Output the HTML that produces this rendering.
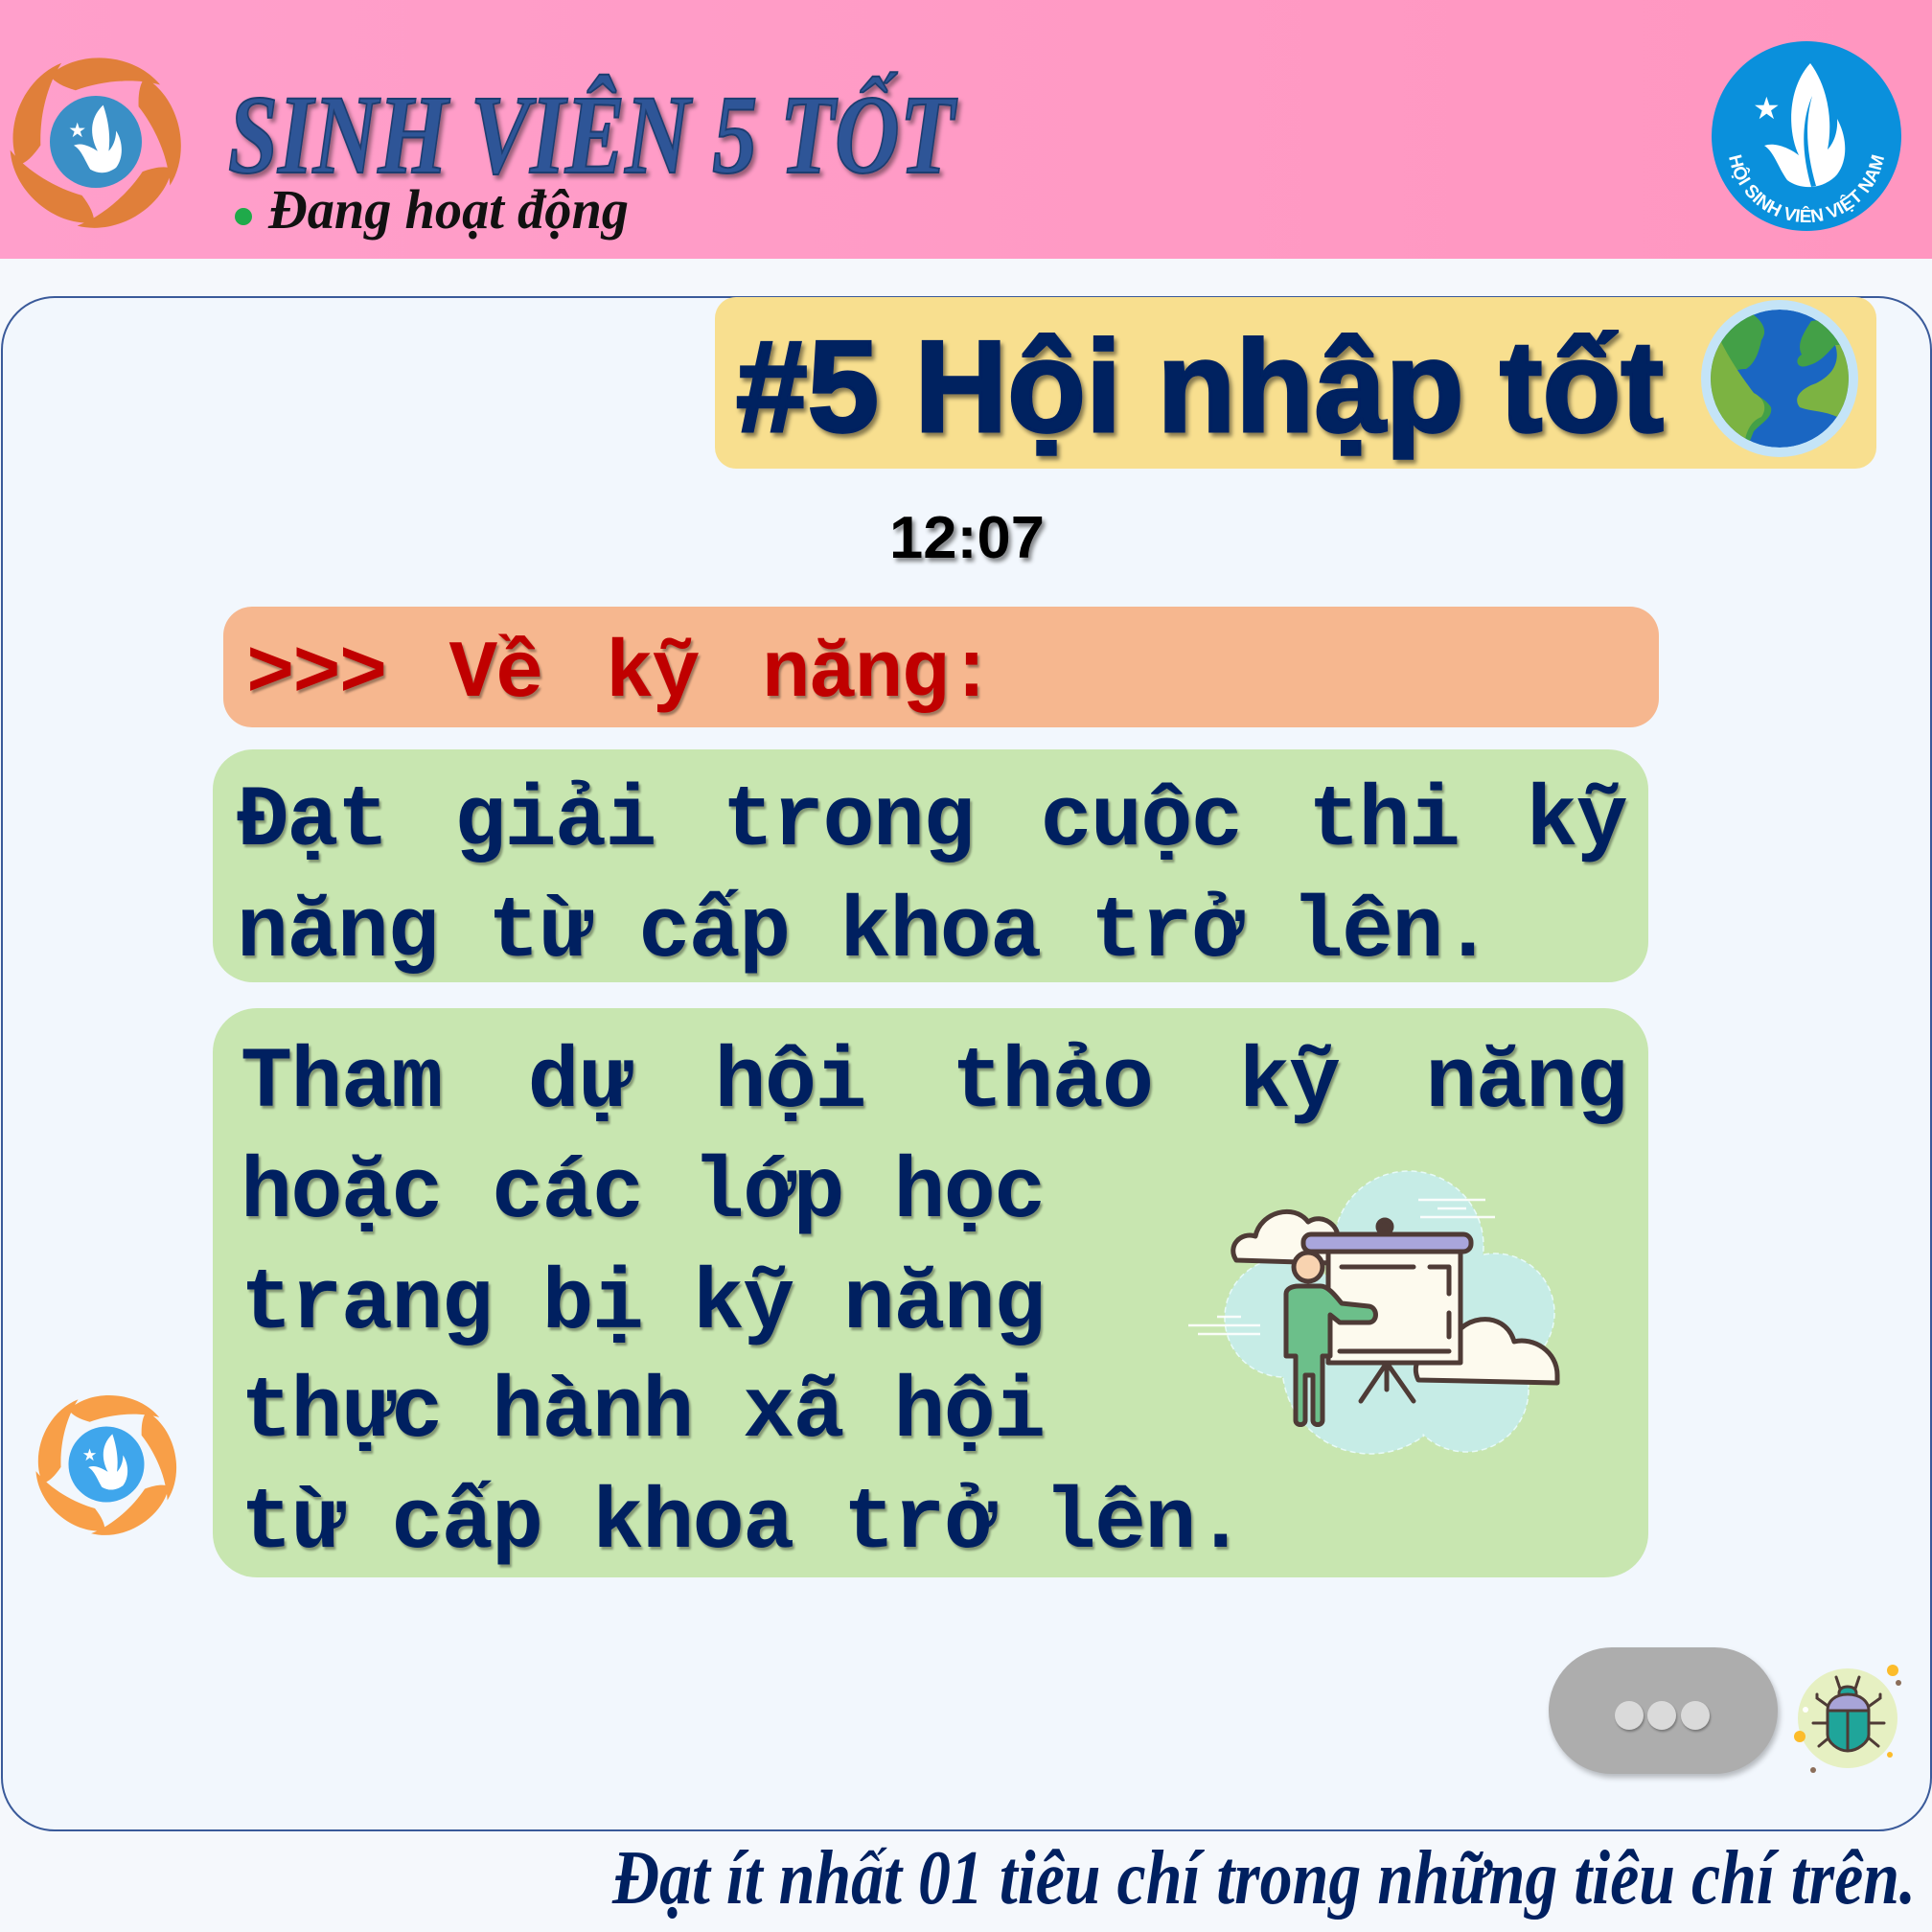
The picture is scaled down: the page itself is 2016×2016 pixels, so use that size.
<!DOCTYPE html>
<html><head><meta charset="utf-8"><style>
html,body{margin:0;padding:0}
body{width:2016px;height:2016px;position:relative;overflow:hidden;background:#f5f8fc;font-family:"Liberation Sans",sans-serif}
.abs{position:absolute}
.mono{font-family:"Liberation Mono","DejaVu Sans Mono",monospace;font-weight:bold;font-size:90px;letter-spacing:-1.6px;color:#002060;text-shadow:2px 3px 2px rgba(0,0,0,.35);white-space:pre}
.j{text-align:justify;text-align-last:justify}
</style></head><body>
<svg width="0" height="0" style="position:absolute">
<defs>
<symbol id="logo" viewBox="-100 -100 200 200">
 <g id="pet"><path d="M-50,-72 C-20,-100 40,-98 70,-62 C40,-70 5,-66 -22,-56 C-36,-60 -45,-65 -50,-72 Z"/></g>
 <use href="#pet" transform="rotate(72)"/><use href="#pet" transform="rotate(144)"/><use href="#pet" transform="rotate(216)"/><use href="#pet" transform="rotate(288)"/>
</symbol>
</defs>
</svg>

<!-- header -->
<div class="abs" style="left:0;top:0;width:2016px;height:270px;background:linear-gradient(90deg,#ff9fcb,#ff9ac4 60%,#ff96c0)"></div>
<svg class="abs" style="left:4px;top:52px" width="192" height="192" viewBox="0 0 200 200"><g fill="#e07f3a"><use href="#logo" x="0" y="0" width="200" height="200"/><use href="#logo" x="0" y="0" width="200" height="200" transform="rotate(36 100 100) scale(1)" opacity="0"/></g><circle cx="100" cy="100" r="50" fill="#3a8fc6"/><path fill="#fff" d="M108,60 C92,75 94,95 102,110 C94,105 84,100 76,104 C84,108 88,120 94,130 C104,136 114,134 122,128 C130,118 130,100 122,88 C122,98 118,106 114,110 C116,94 114,78 108,60 Z"/><text x="70" y="95" font-size="22" fill="#fff" font-family="DejaVu Sans">★</text></svg>
<svg class="abs" style="left:0;top:0" width="2016" height="270">
 <defs><filter id="sh"><feDropShadow dx="3" dy="4" stdDeviation="2" flood-opacity=".4"/></filter></defs>
 <text x="238" y="180" font-family="Liberation Serif" font-weight="bold" font-style="italic" font-size="118" fill="#2f5597" textLength="758" lengthAdjust="spacingAndGlyphs" stroke="#1f3d70" stroke-width="2" filter="url(#sh)">SINH VIÊN 5 TỐT</text>
 <circle cx="254" cy="226" r="9" fill="#1faa4a"/>
 <text x="280" y="238" font-family="Liberation Serif" font-weight="bold" font-style="italic" font-size="58" fill="#111" textLength="376" lengthAdjust="spacingAndGlyphs">Đang hoạt động</text>
</svg>
<svg class="abs" style="left:1785px;top:42px" width="200" height="200" viewBox="0 0 200 200">
 <circle cx="100" cy="100" r="99" fill="#0a90dc"/>
 <path fill="#fff" d="M104,24 C80,50 80,95 92,120 C82,112 66,106 56,110 C66,116 70,132 80,146 C96,158 120,154 132,140 C144,124 142,100 132,82 C133,96 128,108 122,114 C128,84 122,48 104,24 Z"/>
 <path fill="#0a90dc" d="M106,58 C98,86 100,118 110,152 L105,153 C95,118 94,86 106,58 Z"/>
 <text x="44" y="82" font-size="32" fill="#fff" font-family="DejaVu Sans">★</text>
 <path id="arc" d="M18,108 A82,82 0 0 0 182,108" fill="none"/>
 <text font-family="Liberation Sans" font-weight="bold" font-size="19" fill="#fff"><textPath href="#arc" startOffset="50%" text-anchor="middle">HỘI SINH VIÊN VIỆT NAM</textPath></text>
</svg>

<!-- panel -->
<div class="abs" style="left:1px;top:309px;width:2011px;height:1598px;background:#f2f7fd;border:2px solid #3a5a9a;border-radius:56px"></div>

<!-- yellow title -->
<div class="abs" style="left:746px;top:310px;width:1212px;height:179px;background:#f8df8f;border-radius:22px"></div>
<svg class="abs" style="left:0;top:300px" width="2016" height="320">
 <defs><filter id="sh2"><feDropShadow dx="3" dy="4" stdDeviation="2" flood-opacity=".45"/></filter></defs>
 <text x="768" y="150" font-family="Liberation Sans Narrow, Liberation Sans" font-weight="bold" font-size="136" fill="#002060" stroke="#002060" stroke-width="3" textLength="968" lengthAdjust="spacingAndGlyphs" filter="url(#sh2)">#5 Hội nhập tốt</text>
 <circle cx="1857" cy="95" r="82" fill="#c4e4f7"/>
 <clipPath id="gc"><circle cx="1857" cy="95" r="72"/></clipPath>
 <g clip-path="url(#gc)">
  <circle cx="1857" cy="95" r="72" fill="#1a66c2"/>
  <path fill="#43a047" d="M1785,40 L1825,25 C1840,35 1845,45 1838,55 C1835,70 1830,80 1822,85 C1810,85 1800,90 1808,100 C1820,108 1840,112 1848,125 C1850,135 1840,140 1830,150 L1820,175 L1790,130 Z"/>
  <path fill="#7cb342" d="M1780,60 L1795,55 C1805,75 1815,90 1830,110 C1840,115 1845,125 1838,135 C1825,140 1820,155 1820,170 L1790,150 Z"/>
  <path fill="#43a047" d="M1890,35 C1880,50 1875,60 1880,70 C1872,75 1875,85 1885,82 C1900,78 1905,70 1915,60 L1935,60 L1930,30 Z"/>
  <path fill="#7cb342" d="M1915,60 C1920,75 1915,90 1895,100 C1880,105 1870,115 1878,125 C1890,130 1910,128 1925,140 L1935,140 L1935,60 Z"/>
 </g>
 <text x="928" y="282" font-family="Liberation Sans" font-weight="bold" font-size="62" fill="#000" textLength="162" lengthAdjust="spacingAndGlyphs" filter="url(#sh2)">12:07</text>
</svg>

<!-- orange -->
<div class="abs" style="left:233px;top:633px;width:1498px;height:126px;background:#f6b78f;border-radius:30px"></div>
<div class="abs mono j" style="left:257px;top:650px;width:780px;font-size:84px;letter-spacing:-2px;color:#c00000;line-height:110px">&gt;&gt;&gt; Về kỹ năng:</div>

<!-- green 1 -->
<div class="abs" style="left:222px;top:782px;width:1498px;height:243px;background:#c8e6b0;border-radius:42px"></div>
<div class="abs mono j" style="left:247px;top:800px;width:1450px;line-height:116px">Đạt giải trong cuộc thi kỹ</div>
<div class="abs mono" style="left:247px;top:916px;line-height:116px">năng từ cấp khoa trở lên.</div>

<!-- green 2 -->
<div class="abs" style="left:222px;top:1052px;width:1498px;height:594px;background:#c8e6b0;border-radius:46px"></div>
<div class="abs mono j" style="left:251px;top:1073px;width:1446px;line-height:116px">Tham dự hội thảo kỹ năng</div>
<div class="abs mono" style="left:251px;top:1188px;line-height:116px">hoặc các lớp học</div>
<div class="abs mono" style="left:251px;top:1304px;line-height:116px">trang bị kỹ năng</div>
<div class="abs mono" style="left:251px;top:1417px;line-height:116px">thực hành xã hội</div>
<div class="abs mono" style="left:251px;top:1533px;line-height:116px">từ cấp khoa trở lên.</div>

<!-- illustration -->
<svg class="abs" style="left:1230px;top:1200px" width="420" height="330" viewBox="0 0 420 330">
 <g fill="#c6ece6" stroke="#e6faf8" stroke-width="1.5" stroke-dasharray="6 4">
  <circle cx="240" cy="100" r="78"/><circle cx="110" cy="175" r="62"/><circle cx="330" cy="170" r="62"/><circle cx="200" cy="225" r="92"/><circle cx="300" cy="250" r="65"/>
 </g>
 <g fill="#c6ece6"><circle cx="240" cy="100" r="76"/><circle cx="110" cy="175" r="60"/><circle cx="330" cy="170" r="60"/><circle cx="200" cy="225" r="90"/><circle cx="300" cy="250" r="63"/></g>
 <g stroke="#fff" stroke-width="2.5" opacity=".9"><line x1="250" y1="52" x2="320" y2="52"/><line x1="270" y1="61" x2="300" y2="61"/><line x1="252" y1="70" x2="330" y2="70"/><line x1="10" y1="183" x2="85" y2="183"/><line x1="20" y1="192" x2="85" y2="192"/><line x1="40" y1="174" x2="65" y2="174"/></g>
 <g stroke="#4e3b36" stroke-width="5" stroke-linejoin="round" stroke-linecap="round">
  <path fill="#fdfaee" d="M60,115 C50,100 65,85 80,90 C85,65 120,55 135,75 C150,65 170,80 165,95 L160,118 Z"/>
  <path fill="#fdfaee" d="M250,240 C240,220 260,200 280,210 C290,170 340,165 350,200 C370,195 395,210 395,235 L395,243 Z"/>
  <circle cx="215" cy="80" r="7" fill="#4e3b36"/>
  <rect x="130" y="88" width="175" height="18" rx="8" fill="#a9a6dc"/>
  <rect x="156" y="106" width="138" height="116" fill="#fdfaee"/>
  <path fill="none" d="M170,122 L245,122 M262,122 L282,122 L282,150 M282,170 L282,195 M168,210 L282,210"/>
  <path fill="none" d="M217,222 L190,262 M217,222 L217,250 M217,222 L245,262"/>
  <path fill="#6cbf8a" d="M112,150 C112,145 118,142 125,142 L148,142 C155,142 162,150 170,160 L198,163 C208,164 208,180 198,180 L168,180 L158,172 L158,215 L150,215 L150,282 C150,288 140,288 140,282 L140,235 L132,235 L132,282 C132,288 122,288 122,282 L122,215 L112,215 Z"/>
  <circle cx="135" cy="122" r="15" fill="#f8d3b0"/>
 </g>
</svg>

<!-- small logo -->
<svg class="abs" style="left:32px;top:1449px" width="158" height="158" viewBox="0 0 200 200"><g fill="#f89f48"><use href="#logo" width="200" height="200"/></g><circle cx="100" cy="100" r="50" fill="#3fa6ec"/><path fill="#fff" d="M108,60 C92,75 94,95 102,110 C94,105 84,100 76,104 C84,108 88,120 94,130 C104,136 114,134 122,128 C130,118 130,100 122,88 C122,98 118,106 114,110 C116,94 114,78 108,60 Z"/><text x="68" y="95" font-size="22" fill="#fff" font-family="DejaVu Sans">★</text></svg>

<!-- typing bubble -->
<div class="abs" style="left:1616px;top:1719px;width:239px;height:132px;background:#adadad;border-radius:66px;box-shadow:2px 4px 6px rgba(0,0,0,.25)"></div>
<div class="abs" style="left:1685px;top:1775px;width:30px;height:30px;border-radius:50%;background:#dadada;box-shadow:1px 2px 2px rgba(0,0,0,.3)"></div>
<div class="abs" style="left:1719px;top:1775px;width:30px;height:30px;border-radius:50%;background:#dadada;box-shadow:1px 2px 2px rgba(0,0,0,.3)"></div>
<div class="abs" style="left:1754px;top:1775px;width:30px;height:30px;border-radius:50%;background:#dadada;box-shadow:1px 2px 2px rgba(0,0,0,.3)"></div>

<!-- bug -->
<svg class="abs" style="left:1860px;top:1720px" width="150" height="150" viewBox="0 0 150 150">
 <circle cx="68" cy="73" r="52" fill="#e6f0c2"/>
 <circle cx="115" cy="23" r="6" fill="#fcbc2a"/><circle cx="121" cy="36" r="3" fill="#8b6e5a"/><circle cx="18" cy="92" r="6" fill="#fcbc2a"/><circle cx="32" cy="127" r="3" fill="#8b6e5a"/><circle cx="112" cy="111" r="3" fill="#fcbc2a"/><circle cx="24" cy="64" r="3" fill="#fff"/>
 <g stroke="#4e3b36" stroke-width="3" fill="none" stroke-linecap="round">
  <path d="M60,42 L56,30 M76,42 L80,30 M50,62 L36,52 L36,48 M48,78 L32,78 M50,92 L38,102 M88,62 L102,52 L102,48 M90,78 L106,78 M88,92 L100,102"/>
 </g>
 <g stroke="#4e3b36" stroke-width="3">
  <path d="M68,40 C58,40 58,48 60,50 L76,50 C78,48 78,40 68,40 Z" fill="#1fa59a"/>
  <path d="M47,65 C47,55 55,48 68,48 C81,48 90,55 90,65 Z" fill="#a8a4d8"/>
  <path d="M47,65 L90,65 L90,90 C90,98 78,107 68,107 C58,107 47,98 47,90 Z" fill="#1fa59a"/>
  <line x1="68" y1="65" x2="68" y2="107"/>
 </g>
</svg>

<!-- bottom text -->
<svg class="abs" style="left:0;top:1910px" width="2016" height="106">
 <text x="639" y="76" font-family="Liberation Serif" font-weight="bold" font-style="italic" font-size="80" fill="#002060" textLength="1360" lengthAdjust="spacingAndGlyphs">Đạt ít nhất 01 tiêu chí trong những tiêu chí trên.</text>
</svg>
</body></html>
